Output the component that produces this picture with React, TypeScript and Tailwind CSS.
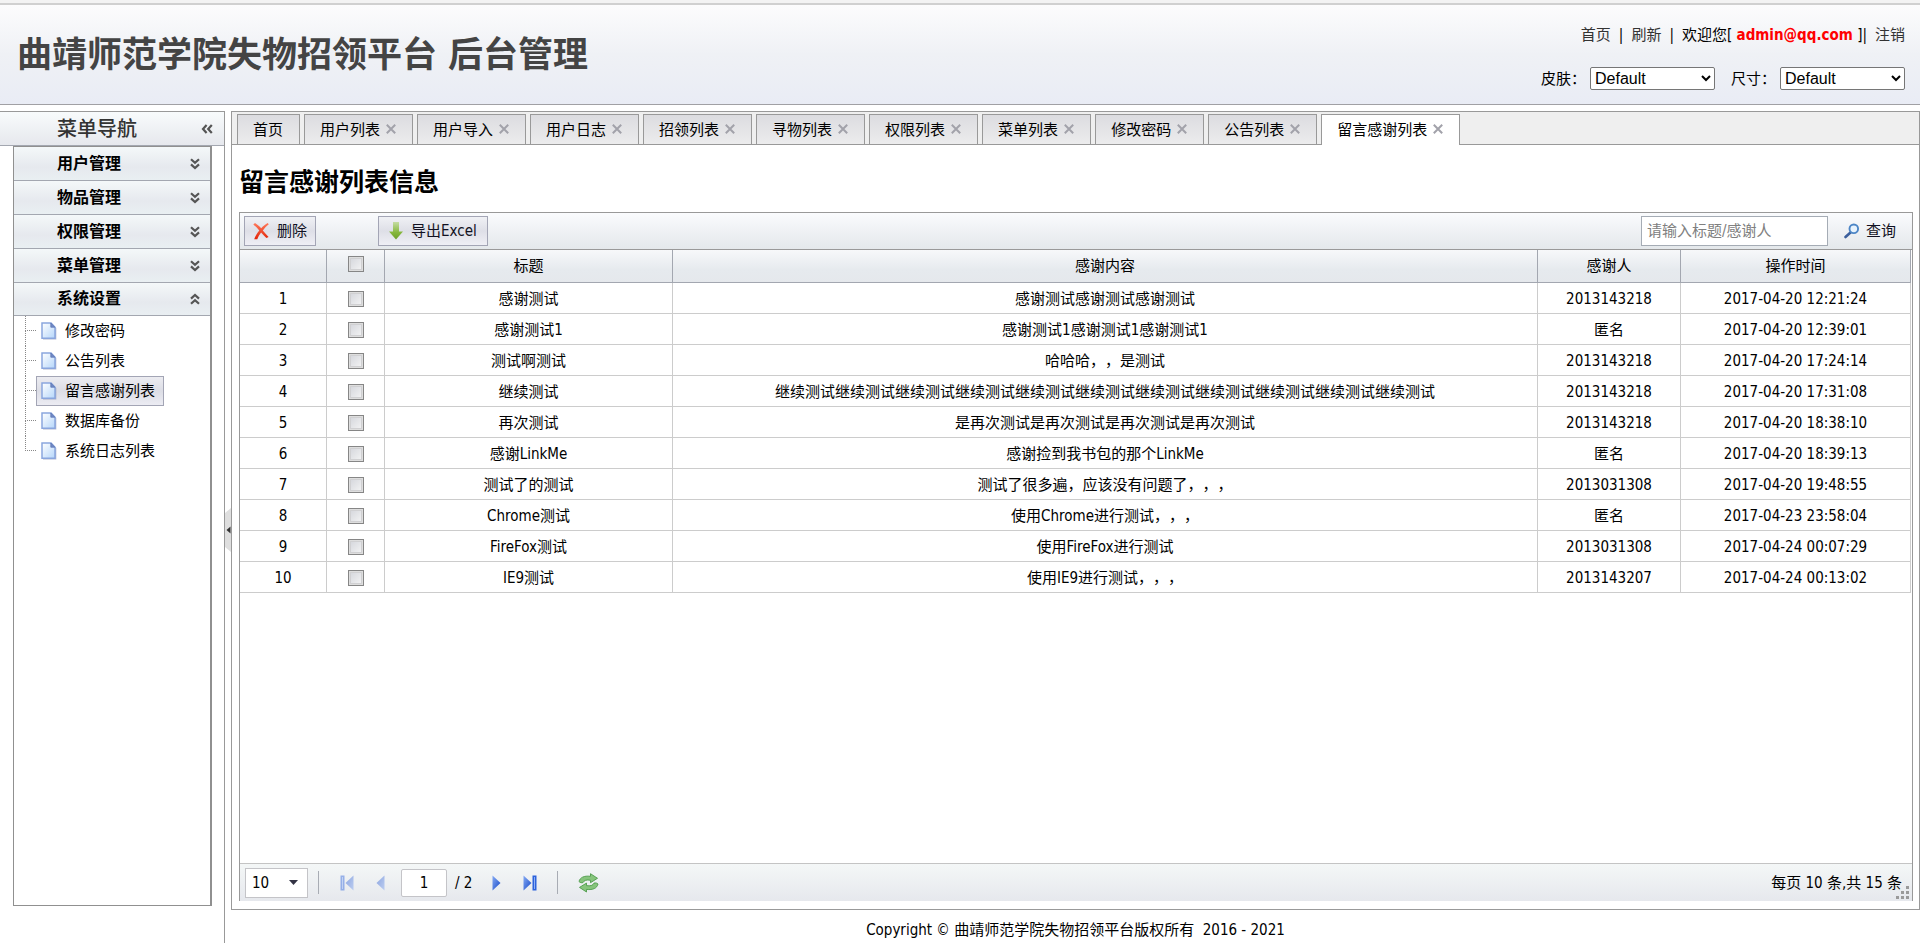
import { useState } from "react";

const tabs = ["首页", "用户列表", "用户导入", "用户日志", "招领列表", "寻物列表", "权限列表", "菜单列表", "修改密码", "公告列表", "留言感谢列表"];

const groups = ["用户管理", "物品管理", "权限管理", "菜单管理", "系统设置"];

const tree = ["修改密码", "公告列表", "留言感谢列表", "数据库备份", "系统日志列表"];

const rows = [
  ["感谢测试", "感谢测试感谢测试感谢测试", "2013143218", "2017-04-20 12:21:24"],
  ["感谢测试1", "感谢测试1感谢测试1感谢测试1", "匿名", "2017-04-20 12:39:01"],
  ["测试啊测试", "哈哈哈，，是测试", "2013143218", "2017-04-20 17:24:14"],
  ["继续测试", "继续测试继续测试继续测试继续测试继续测试继续测试继续测试继续测试继续测试继续测试继续测试", "2013143218", "2017-04-20 17:31:08"],
  ["再次测试", "是再次测试是再次测试是再次测试是再次测试", "2013143218", "2017-04-20 18:38:10"],
  ["感谢LinkMe", "感谢捡到我书包的那个LinkMe", "匿名", "2017-04-20 18:39:13"],
  ["测试了的测试", "测试了很多遍，应该没有问题了，，，", "2013031308", "2017-04-20 19:48:55"],
  ["Chrome测试", "使用Chrome进行测试，，，", "匿名", "2017-04-23 23:58:04"],
  ["FireFox测试", "使用FireFox进行测试", "2013031308", "2017-04-24 00:07:29"],
  ["IE9测试", "使用IE9进行测试，，，", "2013143207", "2017-04-24 00:13:02"],
];

const checkbox =
  "block size-4 mx-auto appearance-none border border-[#868686] bg-linear-to-br from-[#d2d4da] to-[#f6f6f6] shadow-[inset_0_0_0_1px_#dedede,inset_0_0_0_2px_#d0d0d2] checked:from-[#7f8ba3] checked:to-[#a9b3c6]";

const skinSelect =
  "w-[125px] h-[23px] border border-[#767676] rounded-xs bg-white font-['Liberation_Sans',sans-serif] text-base leading-5";

const Chevrons = ({ dir }: { dir: "down" | "up" | "left" }) => {
  const turn = dir === "down" ? "" : dir === "up" ? "rotate-180" : "rotate-90";
  return (
    <svg className={turn} width="10" height="12" viewBox="0 0 10 12" fill="none" stroke="#555" strokeWidth="2.2">
      <path d="M1 1.2l4 3.6 4-3.600M1 6.400l4 3.600 4-3.600" />
    </svg>
  );
};

const FileIcon = () => (
  <svg width="16" height="18" viewBox="0 0 16 18">
    <defs>
      <linearGradient id="file" x1="0" y1="0" x2="1" y2="1">
        <stop offset="0" stopColor="#ffffff" />
        <stop offset="1" stopColor="#b5d6fa" />
      </linearGradient>
    </defs>
    <path d="M2 1.5h9L15.300 6v11.500H2z" fill="#7f8bb0" opacity=".6" />
    <path d="M1 1h9l4 4.200v11H1z" fill="url(#file)" stroke="#8aa6de" strokeWidth="1.500" />
    <path d="M9.800 1l4 4.200h-4z" fill="#7289c4" stroke="#5e78b8" strokeWidth=".8" />
  </svg>
);

const DeleteIcon = () => (
  <svg width="16" height="18" viewBox="0 0 16 18">
    <defs>
      <linearGradient id="del" x1="0" y1="0" x2="0" y2="1">
        <stop offset="0" stopColor="#ff7a5c" />
        <stop offset="1" stopColor="#e22306" />
      </linearGradient>
    </defs>
    <path
      d="M.3 2.500L2 1c2.400 1.400 4.400 3.300 6.200 5.300C10 4.300 12 2.600 14.600 1.100l1.200 1.100C13.300 4.200 11.300 6.400 9.800 8.500c2.200 2.500 4 4.600 5.800 6.600l-2.200.8c-2-1.500-3.600-3.400-5.300-5.300-1.800 2.300-2.900 4.400-3.800 6.600l-3.100.1c1-3.200 2.900-6.200 5.100-8.800C4.400 6.200 2.500 4.400.3 2.500z"
      fill="url(#del)"
    />
  </svg>
);

const DownIcon = () => (
  <svg width="14" height="18" viewBox="0 0 14 18">
    <defs>
      <linearGradient id="down" x1="0" y1="0" x2="0" y2="1">
        <stop offset="0" stopColor="#c5dca4" />
        <stop offset=".6" stopColor="#86b73c" />
        <stop offset="1" stopColor="#6d9f28" />
      </linearGradient>
    </defs>
    <path d="M4 0h6v9.500h4L7 17.500 0 9.500h4z" fill="url(#down)" />
  </svg>
);

const SearchIcon = () => (
  <svg width="16" height="16" viewBox="0 0 16 16" fill="none">
    <path d="M6.500 9.500L1.500 14" stroke="#3c5f9c" strokeWidth="2.600" strokeLinecap="round" />
    <circle cx="9.800" cy="5.800" r="4.300" fill="#e8f3fd" stroke="#4d86c6" strokeWidth="1.900" />
  </svg>
);

const PageArrow = ({ bar, back }: { bar?: boolean; back?: boolean }) => (
  <svg className={back ? "rotate-180 opacity-45" : ""} width={bar ? 14 : 9} height="16" viewBox={bar ? "0 0 14 16" : "0 0 9 16"}>
    <defs>
      <linearGradient id="arrow" x1="0" y1="0" x2="1" y2="1">
        <stop offset="0" stopColor="#86abf4" />
        <stop offset="1" stopColor="#1648c8" />
      </linearGradient>
    </defs>
    <path d="M.5.500L8.500 8l-8 7.500z" fill="url(#arrow)" />
    {bar && <path d="M9.500.500h4v15h-4z" fill="#2c62dc" />}
    {bar && <path d="M11 2h1v12h-1z" fill="#8fb0f5" />}
  </svg>
);

const RefreshIcon = () => (
  <svg width="21" height="20" viewBox="0 0 21 20">
    <g fill="#86c47c" stroke="#4d9b49" strokeWidth=".9" strokeLinejoin="round">
      <path d="M1 8.500C2 4.500 6 2.500 12.500 3.300V.7L19.500 5.300l-7 4.400V7.300C8.500 6.500 6 7.300 5 9.600 3.500 10 2 9.600 1 8.500z" />
      <path d="M20 11c-1 4.200-5 6.200-11.500 5.400V19L1.500 14.400l7-4.300v2.500c4 .7 6.500-.2 7.500-2.500 1.500-.4 3-.1 4 .9z" />
    </g>
  </svg>
);

const App = () => {
  const [active, setActive] = useState(tabs.length - 1);
  const [node, setNode] = useState(2);

  return (
    <div className="flex flex-col min-h-screen bg-white text-black text-[15px] leading-5 font-['DejaVu_Sans_Condensed','Noto_Sans_CJK_SC',sans-serif] [text-spacing-trim:space-all]">
      <div className="h-[3px] bg-[#f3f3f3]" />
      <header className="flex justify-between h-[102px] mb-1.5 pl-[17px] pr-[15px] border-t-2 border-b border-t-[#d0d0d0] border-b-[#a0a0a4] bg-linear-to-b from-[#fcfcfd] via-[#eff1f5] via-50% to-[#e9ecf5]">
        <h1 className="self-center text-[35px] leading-10 font-bold text-[#444]">曲靖师范学院失物招领平台 后台管理</h1>
        <div className="flex flex-col items-end justify-between pt-5 pb-3.5">
          <div className="flex items-center">
            <a href="#home" className="text-[#333]">首页</a>
            <span className="mx-2">|</span>
            <a href="#reload" className="text-[#333]">刷新</a>
            <span className="mx-2">|</span>
            <span>欢迎您[ <b className="text-[#f00]">admin@qq.com</b> ]|</span>
            <a href="#logout" className="ml-2 text-[#333]">注销</a>
          </div>
          <div className="flex items-center">
            <label htmlFor="skin" className="mr-1">皮肤：</label>
            <select id="skin" className={skinSelect}>
              <option>Default</option>
            </select>
            <label htmlFor="size" className="ml-4 mr-1">尺寸：</label>
            <select id="size" className={skinSelect}>
              <option>Default</option>
            </select>
          </div>
        </div>
      </header>

      <div className="flex flex-1">
        <aside className="flex flex-col w-[225px] shrink-0 border-t border-r border-[#999]">
          <div className="flex items-center h-[34px] pl-[57px] pr-3 border-b border-[#a3a7b0] bg-linear-to-b from-[#f8fbfc] to-[#e6e8ed]">
            <h2 className="flex-1 text-xl leading-6 font-medium text-[#333]">菜单导航</h2>
            <button aria-label="收起"><Chevrons dir="left" /></button>
          </div>
          <nav className="flex-1 ml-[13px] mr-3 mb-[37px] border border-r-2 border-[#909090]">
            {groups.map((name, i) => (
              <button
                key={name}
                className={`flex items-center w-full pl-[43px] pr-2.5 border-b border-[#a3a7b0] bg-linear-to-b from-[#f4f8f9] via-[#e6e9ee] via-60% to-[#e9eff2] text-left ${
                  i === groups.length - 1 ? "h-[33px]" : "h-[34px]"
                }`}
              >
                <span className="flex-1 text-base leading-6 font-bold">{name}</span>
                <Chevrons dir={i === groups.length - 1 ? "up" : "down"} />
              </button>
            ))}
            <ul className="pl-[11px]">
              {tree.map((name, i) => (
                <li key={name} className="flex h-[30px]">
                  <span className="flex flex-col w-[11px]">
                    <span className="h-[15px] border-l border-b border-dotted border-[#888]" />
                    {i < tree.length - 1 && <span className="h-[15px] border-l border-dotted border-[#888]" />}
                  </span>
                  <button
                    onClick={() => setNode(i)}
                    className={`flex items-center gap-2 h-[30px] pl-1 pr-2 border ${
                      node === i ? "border-[#a3a5b5] bg-linear-to-b from-[#ececf1] via-[#dcdde5] to-[#ececf3]" : "border-transparent"
                    }`}
                  >
                    <FileIcon />
                    {name}
                  </button>
                </li>
              ))}
            </ul>
          </nav>
        </aside>

        <div className="flex items-center w-1.5 pt-1.5 shrink-0">
          <button aria-label="折叠菜单">
            <svg width="6" height="44" viewBox="0 0 6 44">
              <path d="M6 0v44L0 39V5z" fill="#dedede" />
              <path d="M5.500 18.500v7L1.500 22z" fill="#333" />
            </svg>
          </button>
        </div>

        <div className="flex flex-col flex-1 min-w-0">
          <main className="flex flex-col flex-1 border border-[#999]">
            <div className="flex items-end gap-1 h-[33px] pl-[5px] border-b border-[#999] bg-[#efefef]">
              {tabs.map((name, i) => (
                <div
                  key={name}
                  className={`flex items-center border border-b-0 border-[#999] pl-[15px] pr-4 ${i > 0 ? "gap-1.5" : ""} ${
                    active === i ? "h-[31px] -mb-px bg-white" : "h-[30px] bg-linear-to-b from-[#dcdce0] to-[#ececed]"
                  }`}
                >
                  <button onClick={() => setActive(i)}>{name}</button>
                  {i > 0 && (
                    <button aria-label={`关闭${name}`} className="mb-0.5">
                      <svg width="10" height="10" viewBox="0 0 10 10" stroke="#a2a2aa" strokeWidth="2">
                        <path d="M.8.800l8.400 8.400M9.200.800L.8 9.200" />
                      </svg>
                    </button>
                  )}
                </div>
              ))}
            </div>

            <h2 className="px-[7px] pt-[22px] pb-[13px] text-[25px] leading-8 font-bold">留言感谢列表信息</h2>

            <section className="flex flex-col flex-1 ml-[7px] mr-1.5 mb-2 border border-b-0 border-[#999]">
              <div className="flex items-center h-[37px] px-1 border-b border-[#999] bg-linear-to-b from-[#fafbfd] to-[#e4e8eb] text-[#112]">
                <button className="flex items-center gap-2 h-[30px] px-2 mr-[62px] border border-[#a3a5b5] bg-linear-to-b from-[#f0f1f5] via-[#dedfe7] to-[#efeff5]">
                  <DeleteIcon />删除
                </button>
                <button className="flex items-center gap-2 h-[30px] px-2.5 border border-[#a3a5b5] bg-linear-to-b from-[#f0f1f5] via-[#dedfe7] to-[#efeff5]">
                  <DownIcon /><span>导出Excel</span>
                </button>
                <input
                  aria-label="标题或感谢人"
                  placeholder="请输入标题/感谢人"
                  className="w-[187px] h-[30px] ml-auto px-[5px] border border-[#a5acb5] bg-white placeholder:text-[#808080]"
                />
                <button className="flex items-center gap-1.5 ml-4 mr-3">
                  <SearchIcon />查询
                </button>
              </div>

              <div className="flex-1 pr-px">
                <table className="table-fixed w-full text-center border-separate border-spacing-0">
                  <colgroup>
                    <col className="w-[87px]" />
                    <col className="w-[58px]" />
                    <col className="w-[288px]" />
                    <col />
                    <col className="w-[143px]" />
                    <col className="w-[230px]" />
                  </colgroup>
                  <thead className="bg-linear-to-b from-[#f7f8fa] via-[#e6eaee] via-60% to-[#e5e8ec]">
                    <tr className="h-[33px] *:border-r *:border-b *:border-[#a3a7b0] *:p-0 *:font-normal">
                      <th></th>
                      <th><input type="checkbox" aria-label="全选" className={`${checkbox} mb-1`} /></th>
                      <th>标题</th>
                      <th>感谢内容</th>
                      <th>感谢人</th>
                      <th>操作时间</th>
                    </tr>
                  </thead>
                  <tbody>
                    {rows.map((row, i) => (
                      <tr key={i} className="h-[31px] *:border-r *:border-b *:border-[#ccc] *:p-0 *:pt-0.5">
                        <td>{i + 1}</td>
                        <td><input type="checkbox" aria-label={`选择第${i + 1}行`} className={checkbox} /></td>
                        {row.map((cell, j) => (
                          <td key={j}>{cell}</td>
                        ))}
                      </tr>
                    ))}
                  </tbody>
                </table>
              </div>

              <div className="relative flex items-center h-[38px] pl-[5px] pr-2.5 border-t border-[#c4c4c4] bg-linear-to-b from-[#f4f7f7] to-[#e6e8ed]">
                <div className="relative">
                  <select aria-label="每页条数" className="block w-[63px] h-[30px] px-1.5 appearance-none border border-[#c4c4c8] bg-white">
                    <option>10</option>
                  </select>
                  <svg className="absolute right-2.5 top-3 pointer-events-none" width="9" height="5" viewBox="0 0 9 5">
                    <path d="M0 0h9L4.500 5z" fill="#334" />
                  </svg>
                </div>
                <span className="w-px h-[23px] mx-2.5 bg-[#a8acb4]" />
                <button aria-label="首页" className="ml-[11px]"><PageArrow bar back /></button>
                <button aria-label="上一页" className="ml-[22px]"><PageArrow back /></button>
                <input aria-label="页码" defaultValue="1" className="w-[46px] h-7 ml-4 mr-2 border border-[#c4c4c8] rounded-xs bg-white text-center" />
                <span className="mr-5">/ 2</span>
                <button aria-label="下一页"><PageArrow /></button>
                <button aria-label="末页" className="ml-[22px]"><PageArrow bar /></button>
                <span className="w-px h-[23px] mx-5 bg-[#a8acb4]" />
                <button aria-label="刷新"><RefreshIcon /></button>
                <span className="ml-auto">每页 10 条,共 15 条</span>
                <svg className="absolute right-[3px] bottom-0.5" width="13" height="13" viewBox="0 0 13 13" fill="#9a9a9a">
                  <path d="M10 0h3v3h-3zM5 5h3v3H5zM10 5h3v3h-3zM0 10h3v3H0zM5 10h3v3H5zM10 10h3v3h-3z" />
                </svg>
              </div>
            </section>
          </main>
          <footer className="h-[33px] pt-2.5 text-center">Copyright © 曲靖师范学院失物招领平台版权所有&nbsp; 2016 - 2021</footer>
        </div>
      </div>
    </div>
  );
};

export default App;
